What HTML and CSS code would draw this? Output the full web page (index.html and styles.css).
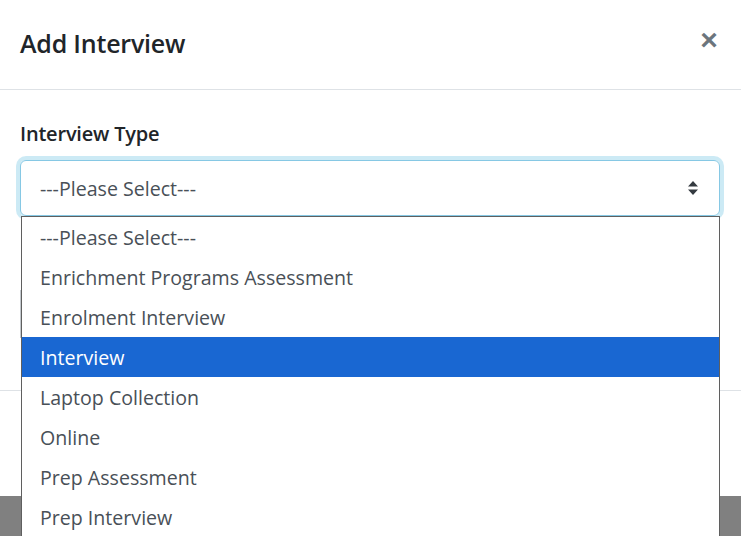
FILE: index.html
```html
<!DOCTYPE html>
<html lang="en">
<head>
<meta charset="utf-8">
<title>Add Interview</title>
<link rel="stylesheet" href="styles.css">
</head>
<body>
<div class="modal">
  <div class="modal-header">
    <h5 class="modal-title">Add Interview</h5>
    <button class="close" type="button" aria-label="Close">&times;</button>
  </div>
  <div class="modal-body">
    <label class="form-label">Interview Type</label>
    <div class="select-wrap">
      <div class="select">
        <span class="select-value">---Please Select---</span>
        <svg class="select-arrows" width="12" height="16" viewBox="0 0 12 16"><path d="M6 1 L11 6.5 H1 Z M6 15 L11 9.5 H1 Z" fill="#343a40"/></svg>
      </div>
      <ul class="dropdown">
        <li class="option">---Please Select---</li>
        <li class="option">Enrichment Programs Assessment</li>
        <li class="option">Enrolment Interview</li>
        <li class="option selected">Interview</li>
        <li class="option">Laptop Collection</li>
        <li class="option">Online</li>
        <li class="option">Prep Assessment</li>
        <li class="option">Prep Interview</li>
      </ul>
    </div>
    <div class="hidden-field"></div>
  </div>
  <div class="modal-footer"></div>
</div>
</body>
</html>
```
FILE: styles.css
```css
html, body {
  margin: 0;
  padding: 0;
}
body {
  background: #808080;
  width: 741px;
  height: 536px;
  overflow: hidden;
  font-family: "Open Sans", "Noto Sans", sans-serif;
  color: #212529;
}
.modal {
  background: #fff;
  height: 496px;
  display: flex;
  flex-direction: column;
}
.modal-header {
  height: 90px;
  box-sizing: border-box;
  border-bottom: 1px solid #dee2e6;
  display: flex;
  align-items: flex-start;
  justify-content: space-between;
  padding: 26px 20px 0 20px;
}
.modal-title {
  margin: 0;
  font-size: 25px;
  font-weight: 600;
  line-height: 34px;
  letter-spacing: -0.2px;
}
.close {
  border: 0;
  background: none;
  padding: 0;
  margin: 0;
  font-family: "Liberation Sans", sans-serif;
  font-size: 30px;
  line-height: 26px;
  font-weight: 700;
  color: #6c757d;
  width: 24px;
  margin-top: 1px;
}
.modal-body {
  padding: 20px 20px 0 20px;
  height: 300px;
  box-sizing: border-box;
  position: relative;
}
.form-label {
  display: block;
  font-size: 20px;
  font-weight: 600;
  line-height: 28px;
  margin: 10px 0 12px 0;
  letter-spacing: -0.2px;
}
.select-wrap {
  position: relative;
}
.select {
  height: 56px;
  box-sizing: border-box;
  border: 1px solid #86c8e4;
  border-radius: 6px;
  box-shadow: 0 0 0 4px rgba(120, 200, 230, 0.38);
  display: flex;
  align-items: center;
  justify-content: space-between;
  padding: 0 20px 0 19px;
  margin: 0 1px 0 0;
}
.select-value {
  font-size: 19.6px;
  color: #495057;
}
.select-arrows {
  display: block;
}
.hidden-field {
  width: 2px;
  height: 48px;
  border-left: 1px solid #c3c8cd;
  margin-top: 74px;
  margin-left: 0;
}
.dropdown {
  position: absolute;
  top: 56px;
  left: 1px;
  width: 699px;
  box-sizing: border-box;
  list-style: none;
  margin: 0;
  padding: 0;
  background: #fff;
  border: 1px solid #5f5f5f;
  border-bottom: 0;
  z-index: 10;
}
.option {
  height: 38px;
  line-height: 38px;
  padding: 2px 0 0 18px;
  font-size: 19.6px;
  color: #495057;
}
.option.selected {
  background: #1967d2;
  color: #fff;
}
.modal-footer {
  border-top: 1px solid #dee2e6;
  flex: 1;
}
```
